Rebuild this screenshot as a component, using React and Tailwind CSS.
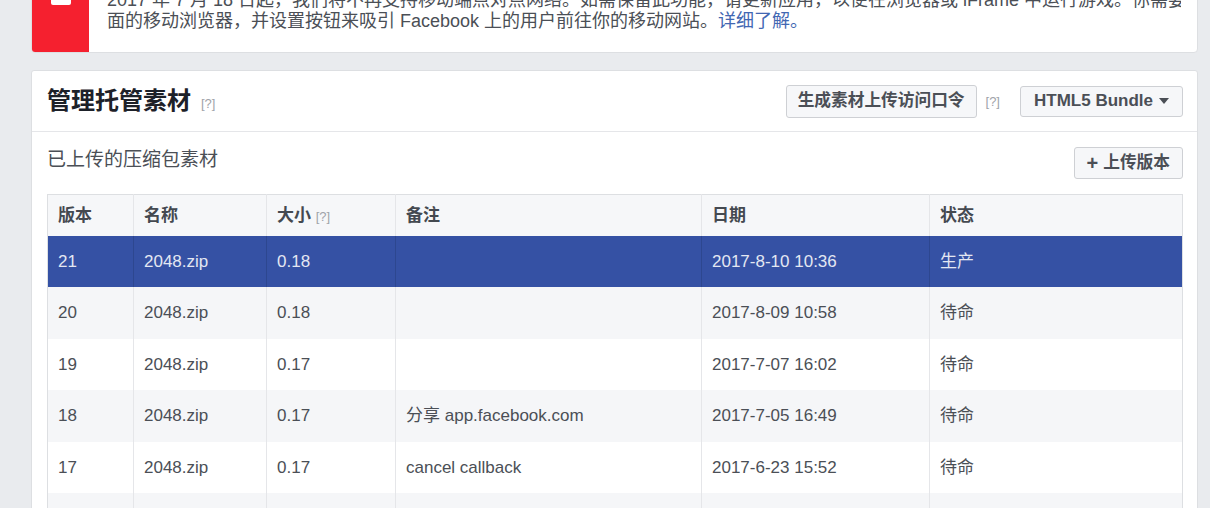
import React from 'react';

const ROWS = [
  { v: '21', name: '2048.zip', size: '0.18', note: '', date: '2017-8-10 10:36', status: '生产', active: true },
  { v: '20', name: '2048.zip', size: '0.18', note: '', date: '2017-8-09 10:58', status: '待命' },
  { v: '19', name: '2048.zip', size: '0.17', note: '', date: '2017-7-07 16:02', status: '待命' },
  { v: '18', name: '2048.zip', size: '0.17', note: '分享 app.facebook.com', date: '2017-7-05 16:49', status: '待命' },
  { v: '17', name: '2048.zip', size: '0.17', note: 'cancel callback', date: '2017-6-23 15:52', status: '待命' },
  { v: '16', name: '2048.zip', size: '0.16', note: '', date: '2017-6-20 11:14', status: '待命' },
];

const Help = () => <span className="text-[13px] text-[#a0a3a9] font-normal">[?]</span>;

export default function App() {
  return (
    <div className="min-h-screen bg-[#e9ebee] pl-[31px] pr-[12px] overflow-hidden font-['Liberation_Sans','Noto_Sans_CJK_SC',sans-serif]">
      {/* notice */}
      <div className="-mt-[31px] flex bg-white border border-[#dddfe2] rounded-[4px] overflow-hidden">
        <div className="w-[57px] shrink-0 bg-[#f5202f] flex justify-center pt-[15px]">
          <div className="w-[20px] h-[20px] bg-white rounded-[2px]" />
        </div>
        <div className="pl-[18px] pr-[16px] py-[20px] text-[18px] leading-[21px] text-[#4b4f56] min-w-0">
          <div className="whitespace-nowrap overflow-hidden">
            2017 年 7 月 18 日起，我们将不再支持移动端点对点网络。如需保留此功能，请更新应用，以便在浏览器或 iFrame 中运行游戏。你需要检测游戏页
          </div>
          <div className="whitespace-nowrap">
            面的移动浏览器，并设置按钮来吸引 Facebook 上的用户前往你的移动网站。<a className="text-[#4267b2]">详细了解。</a>
          </div>
        </div>
      </div>

      {/* card */}
      <div className="mt-[17px] bg-white border border-[#dddfe2] rounded-[3px]">
        <div className="h-[61px] pl-[15px] pr-[14px] flex items-center justify-between border-b border-[#e5e6e9]">
          <div className="flex items-center gap-[10px]">
            <h2 className="text-[24px] leading-[30px] font-bold text-[#1d2129]">管理托管素材</h2>
            <span className="mt-[4px]"><Help /></span>
          </div>
          <div className="flex items-center">
            <button className="h-[33px] px-[11px] bg-[#f6f7f9] border border-[#ced0d4] rounded-[3px] text-[16.7px] font-bold text-[#4b4f56]">
              生成素材上传访问口令
            </button>
            <span className="ml-[9px] mr-[20px]"><Help /></span>
            <button className="h-[31px] px-[13px] bg-[#f6f7f9] border border-[#ced0d4] rounded-[3px] text-[17px] font-bold text-[#4b4f56] flex items-center gap-[6px]">
              HTML5 Bundle
              <svg width="10" height="6" viewBox="0 0 10 6"><path d="M0 0h10L5 6z" fill="#4b4f56" /></svg>
            </button>
          </div>
        </div>

        <div className="pl-[15px] pr-[14px] pt-[15px]">
          <div className="flex items-start justify-between">
            <div className="text-[19px] leading-[26px] text-[#4b4f56]">已上传的压缩包素材</div>
            <button className="h-[32px] px-[12px] bg-[#f6f7f9] border border-[#ced0d4] rounded-[3px] text-[16.7px] font-bold text-[#4b4f56] flex items-center gap-[5px]">
              <span className="text-[20px] leading-none font-bold">+</span>上传版本
            </button>
          </div>

          <table className="mt-[15px] w-full table-fixed border-collapse border border-[#dddfe2] text-[17px]">
            <colgroup>
              <col className="w-[86px]" />
              <col className="w-[133px]" />
              <col className="w-[129px]" />
              <col className="w-[306px]" />
              <col className="w-[228px]" />
              <col />
            </colgroup>
            <thead>
              <tr className="h-[41px] bg-[#f6f7f9] text-left text-[#444950]">
                <th className="px-[10px] font-bold">版本</th>
                <th className="px-[10px] font-bold border-l border-[#e5e6e9]">名称</th>
                <th className="px-[10px] font-bold border-l border-[#e5e6e9]">大小 <Help /></th>
                <th className="px-[10px] font-bold border-l border-[#e5e6e9]">备注</th>
                <th className="px-[10px] font-bold border-l border-[#e5e6e9]">日期</th>
                <th className="px-[10px] font-bold border-l border-[#e5e6e9]">状态</th>
              </tr>
            </thead>
            <tbody>
              {ROWS.map((r, i) => {
                const bg = r.active ? 'bg-[#3551a4] text-[#e3e7f2]' : i % 2 === 1 ? 'bg-[#f5f6f8] text-[#4b4f56]' : 'bg-white text-[#4b4f56]';
                const line = r.active ? 'border-l border-[#2d4790]' : 'border-l border-[#e5e6e9]';
                return (
                  <tr key={r.v} className={`h-[51.5px] ${bg}`}>
                    <td className="px-[10px]">{r.v}</td>
                    <td className={`px-[10px] ${line}`}>{r.name}</td>
                    <td className={`px-[10px] ${line}`}>{r.size}</td>
                    <td className={`px-[10px] ${line}`}>{r.note}</td>
                    <td className={`px-[10px] ${line}`}>{r.date}</td>
                    <td className={`px-[10px] ${line}`}>{r.status}</td>
                  </tr>
                );
              })}
            </tbody>
          </table>
        </div>
      </div>
    </div>
  );
}
